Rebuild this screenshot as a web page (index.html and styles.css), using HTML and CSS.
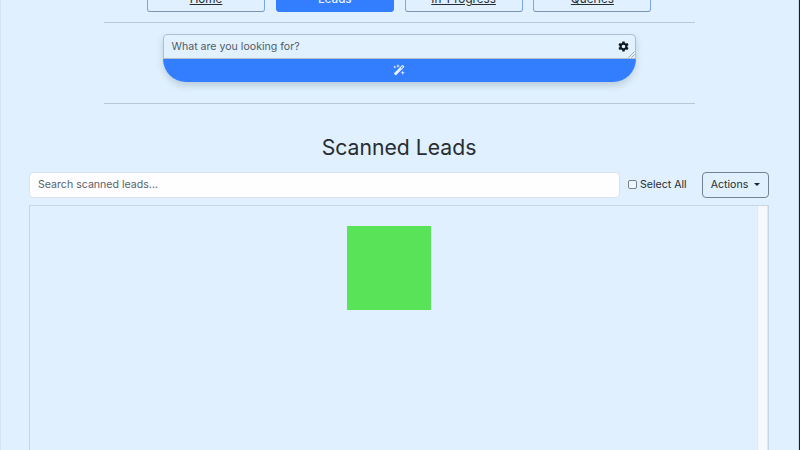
FILE: index.html
```html
<!DOCTYPE html>
<html lang="en">
<head>
<meta charset="utf-8">
<title>Scanned Leads</title>
<link rel="stylesheet" href="styles.css">
</head>
<body>
<div class="page">
  <header class="top">
    <nav class="tabs">
      <a class="tab">Home</a>
      <a class="tab active">Leads</a>
      <a class="tab">In-Progress</a>
      <a class="tab">Queries</a>
    </nav>
    <section class="finder">
      <div class="query">
        <span>What are you looking for?</span>
        <svg class="gear" viewBox="0 0 24 24"><path fill-rule="evenodd" d="M9.6 1h4.8l.7 3.400 2.200 1.300 3.300-1.100 2.400 4.100-2.600 2.300v2l2.600 2.300-2.400 4.100-3.300-1.100-2.200 1.300-.7 3.400H9.600l-.7-3.400-2.200-1.300-3.300 1.100L1 15.300l2.600-2.300v-2L1 8.700l2.400-4.100 3.300 1.100 2.200-1.300zM12 8a4 4 0 1 0 0 8 4 4 0 0 0 0-8z"/></svg>
        <svg class="grip" viewBox="0 0 7 7"><path d="M.5 6.500l6-6M3.500 6.500l3-3"/></svg>
      </div>
      <button class="magic" aria-label="Search">
        <svg viewBox="0 0 24 24"><path fill-rule="evenodd" d="M19 1.500l4 4L5.500 23l-4-4zM19 4.300L15.200 8.100 16.400 9.300l3.800-3.800z"/><path d="M10 0l1 3 3 1-3 1-1 3-1-3-3-1 3-1zM3.500 3l.9 2.100 2.100.9-2.100.9L3.500 9l-.9-2.100L.5 6l2.100-.9zM19.500 13l1.200 3.300L24 17.500l-3.300 1.200-1.200 3.300-1.200-3.300-3.300-1.200 3.300-1.200z"/></svg>
      </button>
    </section>
  </header>
  <main class="leads">
    <h1>Scanned Leads</h1>
    <div class="toolbar">
      <input class="search" type="text" placeholder="Search scanned leads...">
      <label class="select"><span class="box"></span>Select All</label>
      <button class="actions">Actions<span class="caret"></span></button>
    </div>
    <div class="list">
      <div class="content"><div class="loader"></div></div>
      <div class="track"></div>
    </div>
  </main>
</div>
</body>
</html>
```
FILE: styles.css
```css
* { box-sizing: border-box; }
body {
  margin: 0;
  height: 450px;
  overflow: hidden;
  background: #e0f0fe;
  color: #272d32;
  font: 10.6px/16px Inter, sans-serif;
}
.page {
  height: 450px;
  overflow: hidden;
  border-left: 1px solid #d5e6f3;
  border-right: 1px solid #182127;
  box-shadow: inset -1px 0 #c8d9e5;
}
.top {
  display: flow-root;
  width: 591px;
  height: 104px;
  margin-left: 103px;
  border-bottom: 1px solid #b9c8d5;
}
.tabs {
  display: flex;
  gap: 10.8px;
  height: 37px;
  margin-top: -14px;
  padding-left: 43px;
  border-bottom: 1px solid #b9c8d5;
}
.tab {
  flex: none;
  width: 118px;
  height: 26px;
  padding-top: 4px;
  border: 1px solid #78a8e8;
  border-bottom-color: #7895b8;
  border-radius: 3px;
  font-size: 11.7px;
  text-align: center;
  text-decoration: underline;
}
.tab.active {
  background: #337dff;
  border-color: #337dff;
  color: #e8f4ff;
  font-weight: 500;
  text-decoration: none;
}
.finder {
  width: 473px;
  height: 48px;
  margin: 11px 0 0 59px;
  border-radius: 4px 4px 24px 24px;
  box-shadow: 0 4px 7px #3c556b38;
}
.query {
  position: relative;
  display: flex;
  align-items: center;
  justify-content: space-between;
  height: 25px;
  padding: 0 6px 0 7.500px;
  border: 1px solid #b3bdd0;
  border-radius: 4px 4px 0 0;
  background: #e1f1fe;
  color: #515d67;
}
.gear { width: 11px; height: 11px; fill: #111a20; }
.grip {
  position: absolute;
  right: 0;
  bottom: 0;
  width: 7px;
  height: 7px;
  fill: none;
  stroke: #82909a;
  stroke-width: .7;
}
.magic {
  display: flex;
  justify-content: center;
  width: 100%;
  height: 23px;
  padding: 5px 1px 0 0;
  border: 0;
  border-radius: 0 0 23px 23px;
  background: #337dff;
}
.magic svg { width: 12px; height: 12px; fill: #e9f5ff; }
.leads {
  width: 740px;
  margin-left: 28px;
}
h1 {
  margin: 30px 0 10px;
  font-size: 21.2px;
  font-weight: 400;
  line-height: 27px;
  text-align: center;
}
.toolbar {
  display: flex;
  align-items: center;
  height: 27px;
}
.search {
  width: 591px;
  height: 26px;
  padding: 0 8px;
  border: 1px solid #d9e2ed;
  border-radius: 4px;
  background: #fefdff;
  font: inherit;
}
.search::placeholder { color: #56636d; opacity: 1; }
.select {
  display: flex;
  align-items: center;
  gap: 3px;
  width: 74px;
  margin-left: 8px;
  white-space: nowrap;
}
.box {
  width: 9px;
  height: 9px;
  border: 1px solid #77828b;
  border-radius: 2px;
  background: #edf7ff;
}
.actions {
  display: flex;
  align-items: center;
  justify-content: center;
  gap: 6px;
  width: 67px;
  height: 26px;
  padding: 0;
  border: 1px solid #75838e;
  border-radius: 4px;
  background: transparent;
  color: #272d32;
  font: inherit;
}
.caret {
  border: 3px solid transparent;
  border-top-color: #212529;
  border-bottom: 0;
}
.list {
  display: flex;
  height: 260px;
  margin-top: 7px;
  border: 1px solid #c9d6e1;
}
.content {
  flex: 1;
  padding: 20px 0 0 317px;
}
.loader {
  width: 84px;
  height: 84px;
  background: #59e359;
}
.track {
  width: 11px;
  border: 1px solid #e2e8ee;
  border-width: 0 1px;
  background: #f6f8fb;
}
```
